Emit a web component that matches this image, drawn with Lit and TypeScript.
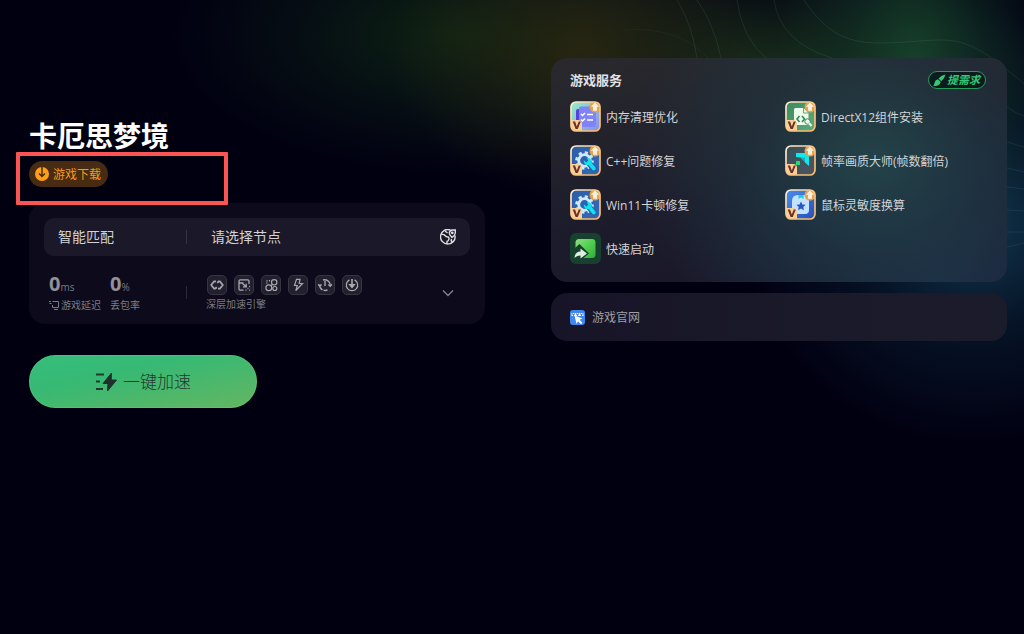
import { LitElement, html, css, svg } from "lit";
import { customElement } from "lit/decorators.js";

/* Shared frame of the member tools: gold rim, arrow badge and V corner. */
const memberIcon = (id: string, from: string, to: string, art: unknown) => html`
  <svg class="tile" viewBox="0 0 31 31" aria-hidden="true">
    <defs>
      <linearGradient id="bg-${id}" x1="0" y1="0" x2="1" y2="1">
        <stop offset="0" stop-color=${from} /><stop offset="1" stop-color=${to} />
      </linearGradient>
      <linearGradient id="rim-${id}" x1="0" y1="0" x2="1" y2="1">
        <stop offset="0" stop-color="#fff1d6" /><stop offset=".5" stop-color="#f9c683" /><stop offset="1" stop-color="#f9b968" />
      </linearGradient>
      <clipPath id="clip-${id}"><rect x="1" y="1" width="29" height="29" rx="5" /></clipPath>
    </defs>
    <rect x="1" y="1" width="29" height="29" rx="5" fill="url(#bg-${id})" />
    ${art}
    <g clip-path="url(#clip-${id})">
      <circle cx="25" cy="6" r="5.500" fill="#e5a348" />
      <path d="M25 1.500l4.200 4.200h-2.200v4h-4V5.700h-2.200z" fill="#f6efe0" />
      <path d="M0 19h8q4 0 4 4v8H0z" fill="#fbcf9a" />
    </g>
    <path d="M2.700 20.500h2.400l1.700 5 1.900-5h2.100l-3 7.500H5.600z" fill="#6b3326" />
    <rect x="1" y="1" width="29" height="29" rx="5" fill="none" stroke="url(#rim-${id})" stroke-width="1.700" />
  </svg>`;

const gearArt = svg`
  <g fill="none" stroke="#cfeaff">
    <circle cx="14.500" cy="15.500" r="7.800" stroke-width="3" stroke-dasharray="3.100 3.026" />
    <circle cx="14.500" cy="15.500" r="5.800" stroke-width="2.800" />
  </g>
  <path d="M17 16l2 2 5.500 6.500" stroke="#2f62ad" stroke-width="6" fill="none" stroke-linecap="round" />
  <path d="M17 13a4 4 0 0 1 4.700 5l3.700 4.400q1 1.600-.5 2.600t-2.700-.6l-3.600-4.400a4 4 0 0 1-4.800-4.800l2.500 2.300 1.900-1.700z" fill="#10e2ee" />`;

const listArt = svg`
  <rect x="6" y="8" width="14" height="16" rx="2" fill="#5540e0" />
  <rect x="9" y="5.500" width="17" height="20.500" rx="2" fill="#7f83f7" />
  <g stroke="#fff" stroke-width="1.500" fill="none">
    <path d="M11 13l1.500 1.500L15 12M17 13.500h6M11 18.500l1.500 1.500L15 17.500M17 19h6" />
  </g>`;

const codeArt = svg`
  <path d="M10.500 7h8l5 5v12h-13q-1.500 0-1.500-1.500v-14Q9 7 10.500 7z" fill="#edfbe9" />
  <path d="M18.500 7v5h5" fill="none" stroke="#5fa97c" />
  <g fill="none" stroke="#35835c" stroke-width="1.600">
    <path d="M14.500 15l-2.500 3 2.500 3M17 15l2.500 3-2.500 3" />
  </g>
  <circle cx="22.500" cy="20.500" r="2.700" fill="#edfbe9" stroke="#35835c" />
  <path d="M24 22l2.500 3" stroke="#edfbe9" stroke-width="2" />`;

const frameArt = svg`
  <path d="M11 8h13v13l-4-3.500V15h-2l-2.500-2.500L11 12z" fill="#12e9ea" />
  <path d="M15.500 12.500L20 17.500V12.500z" fill="#0cb4c8" />
  <path d="M11 16h4v4h-4z" fill="#19e070" />`;

const starArt = svg`
  <path d="M7 12q0-6 6-6h11v15q0 4-4 4H11q-4 0-4-4z" fill="#c4e2ff" />
  <path d="M13.500 6h5v4L16 8.500 13.500 10z" fill="#16cfe4" />
  <path d="M16 12.500l1.400 2.900 3.200.4-2.300 2.200.6 3.200-2.900-1.600-2.900 1.600.6-3.200-2.300-2.200 3.200-.4z" fill="#2857c0" />`;

const launchIcon = html`
  <svg class="tile" viewBox="0 0 31 31" aria-hidden="true">
    <defs>
      <linearGradient id="launch" x1="0" y1="0" x2="1" y2="1">
        <stop offset="0" stop-color="#8fdc88" /><stop offset=".5" stop-color="#52cf50" /><stop offset="1" stop-color="#31ad3b" />
      </linearGradient>
    </defs>
    <rect width="31" height="31" rx="6" fill="#17402f" />
    <rect x="5.500" y="6" width="20" height="19" rx="3.500" fill="url(#launch)" />
    <path d="M5 15l4.500-4L19 20.500l-6 5H5z" fill="#17402f" />
    <path d="M4.500 25q.5-6.500 6-6.500v-3l6.500 5-6.500 5v-3q-3.500-.3-6 2.500z" fill="#dcefe0" />
  </svg>`;

const services = [
  { name: "内存清理优化", icon: memberIcon("list", "#8ff0c4", "#8a8cf0", listArt) },
  { name: "DirectX12组件安装", icon: memberIcon("code", "#3c8a62", "#5fa97c", codeArt) },
  { name: "C++问题修复", icon: memberIcon("gear", "#2d5ea8", "#3468b6", gearArt) },
  { name: "帧率画质大师(帧数翻倍)", icon: memberIcon("frame", "#36505a", "#4a5560", frameArt) },
  { name: "Win11卡顿修复", icon: memberIcon("gear2", "#2d5ea8", "#3468b6", gearArt) },
  { name: "鼠标灵敏度换算", icon: memberIcon("star", "#4b8cf0", "#2450b8", starArt) },
  { name: "快速启动", icon: launchIcon },
];

const engines = [
  svg`<path d="M9 6.300H7.200L4.200 10l3 3.700h.8l1.800-1.500M11 13.700h1.800l3-3.700-3-3.700H12l-1.800 1.500" stroke-width="1.800" stroke-linejoin="round" />`,
  svg`<path d="M15 9V6q0-1.200-1.200-1.200H6.200Q5 4.800 5 6v8q0 1.200 1.200 1.200H9.500M5 8h4.500M8.500 8.500l3.500 3M12.200 8.800v3H9M13.500 13.500h.9M15.200 11.500h.9M11.500 15.200h.9M15.200 15.200h.9" stroke-width="1.300" />`,
  svg`<circle cx="7.800" cy="12.800" r="2.900" /><circle cx="13.200" cy="7.300" r="2.700" /><circle cx="13.800" cy="13.500" r="2" /><path d="M5 8h1.500M5.500 5.500l1 .8M8.500 5v1.500M10 10.800l1.300-1.500" />`,
  svg`<path d="M12 4.300H8.500L6.500 10.500h2.800L7.800 15.700l6.700-7.200h-3.300z" />`,
  svg`<path d="M7.500 14.900a5.500 5.500 0 0 1-2.700-5.400M8 5a5.500 5.500 0 0 1 7.200 4.500M12.500 14.900a5.500 5.500 0 0 1-4 .3M3.200 9.200l1.600 2 1.800-1.600M16.800 9.200l-1.600 2-1.800-1.600M10 6v5" stroke-width="1.400" />`,
  svg`<path d="M7.500 4.900a5.700 5.700 0 1 0 5 0" /><path d="M10 4v6.500" stroke-width="1.600" /><path d="M7.500 9.500h5L10 12.500z" fill="currentColor" />`,
];

@customElement("app-root")
export class AppRoot extends LitElement {
  static styles = css`
    :host {
      display: block;
      font-family: "Open Sans", "Noto Sans CJK SC", sans-serif;
      color: #d3d4d8;
    }
    * { box-sizing: border-box; }
    h1, h2, p, ul, dl, dd, dt { margin: 0; padding: 0; }
    button, a { font: inherit; color: inherit; text-decoration: none; cursor: pointer; }
    button { border: 0; background: none; padding: 0; }

    .page {
      position: relative;
      isolation: isolate;
      overflow: hidden;
      min-height: 100vh;
      display: grid;
      grid-template-columns: 1fr 1fr;
      align-items: start;
      gap: 66px;
      padding: 58px 17px 58px 29px;
      background:
        radial-gradient(ellipse 190px 150px at calc(100% - 444px) 50px, rgba(48, 42, 16, 0.75), rgba(42, 40, 18, 0.4) 50%, transparent),
        radial-gradient(ellipse 290px 140px at calc(100% - 564px) 35px, rgba(14, 36, 18, 0.95), rgba(10, 28, 22, 0.5) 55%, transparent),
        radial-gradient(ellipse 140px 220px at calc(100% - 109px) 60px, rgba(25, 74, 46, 0.8), rgba(20, 58, 42, 0.45) 50%, transparent),
        radial-gradient(ellipse 280px 120px at calc(100% - 254px) 75px, rgba(28, 54, 28, 0.9), rgba(22, 40, 26, 0.5) 55%, transparent),
        radial-gradient(ellipse 230px 220px at calc(100% - 50px) 225px, rgba(20, 60, 84, 0.9), rgba(12, 40, 62, 0.45) 50%, transparent),
        #010011;
    }
    .contours {
      position: absolute;
      top: 0;
      right: 0;
      z-index: -1;
      width: 400px;
      height: 300px;
      fill: none;
      stroke: rgba(150, 190, 190, 0.11);
    }

    .game { padding-top: 58px; }
    h1 { font-size: 28px; line-height: 40px; font-weight: 700; color: #fff; }
    .download-row { position: relative; display: flex; margin-top: 5px; }
    .download {
      display: flex;
      align-items: center;
      gap: 4px;
      height: 26px;
      padding: 0 7px 0 6px;
      border-radius: 13px;
      background: #472b12;
      color: #f79a17;
      font-size: 12px;
      line-height: 18px;
    }
    .download svg { width: 14px; height: 14px; }
    .download span, .tools span, .site span { padding-top: 2px; }
    .marker {
      position: absolute;
      top: -9px;
      left: -13px;
      width: 212px;
      height: 53px;
      border: 4px solid #fb5454;
      border-radius: 1px;
      pointer-events: none;
    }

    .panel { border-radius: 16px; }
    .accel {
      margin-top: 16px;
      padding: 15px 15px 12px;
      background: #0c0a1b;
    }
    .picker {
      display: grid;
      grid-template-columns: 142px 1fr;
      align-items: center;
      height: 38px;
      border-radius: 10px;
      background: #1b1929;
      font-size: 14px;
      line-height: 20px;
      color: #d2d2d6;
    }
    .picker button { display: flex; align-items: center; justify-content: space-between; height: 14px; padding: 0 14px; text-align: left; }
    .picker button + button { padding-left: 24px; border-left: 1px solid #343242; }
    .picker svg { width: 16px; height: 16px; }

    .status {
      display: grid;
      grid-template-columns: 142px 1fr auto;
      align-items: center;
      margin-top: 17px;
      color: #7b7a83;
      font-size: 10px;
      line-height: 14px;
    }
    .figures { display: flex; gap: 9px; padding-left: 5px; }
    .figures div { display: flex; flex-direction: column-reverse; }
    .figures dt { display: flex; align-items: center; gap: 2px; }
    .figures dt svg { width: 10px; height: 10px; }
    .figures dd { line-height: 22px; }
    .figures b { font-size: 20px; font-weight: 700; color: #929197; }
    .engine { display: flex; align-items: center; gap: 19px; }
    .engine::before { content: ""; width: 1px; height: 13px; background: #2c2a38; }
    .chips { display: flex; gap: 7px; height: 22px; padding-left: 1px; list-style: none; }
    .chips svg {
      display: block;
      width: 20px;
      height: 20px;
      border: 1px solid #373542;
      border-radius: 5px;
      background: #22202e;
      color: #a9a8af;
      fill: none;
      stroke: currentColor;
      stroke-width: 1.200;
    }
    .more { display: grid; place-items: center; width: 14px; height: 14px; margin-right: 15px; }
    .more svg { width: 12px; height: 8px; }

    .boost {
      display: flex;
      align-items: center;
      justify-content: center;
      gap: 6px;
      width: 50%;
      height: 53px;
      margin-top: 31px;
      border-radius: 27px;
      background: linear-gradient(168deg, #37bd7d 0%, #36b974 35%, #64b661 100%);
      box-shadow: inset 0 0 0 1px rgba(110, 214, 140, 0.3);
      color: #24382f;
      font-size: 17px;
      font-weight: 300;
      line-height: 24px;
    }
    .boost svg { width: 22px; height: 20px; }

    .aside { display: grid; gap: 11px; }
    .services {
      padding: 13px 19px 18px;
      background:
        radial-gradient(ellipse 240px 200px at 70% 45%, rgba(36, 72, 76, 0.85), rgba(32, 62, 72, 0.45) 50%, transparent),
        radial-gradient(ellipse 260px 200px at 85% 100%, rgba(32, 58, 86, 0.6), transparent),
        linear-gradient(170deg, #29292d, #1c1b2b 60%, #181628);
    }
    .services header { display: flex; align-items: center; justify-content: space-between; padding-right: 2px; }
    h2 { font-size: 13px; line-height: 18px; font-weight: 700; color: #e2e2e5; }
    .request {
      display: flex;
      align-items: center;
      gap: 1px;
      height: 18px;
      padding: 0 5px 0 4px;
      border: 1px solid #249a5c;
      border-radius: 9px;
      background: #0c1c1d;
      color: #35c878;
      font-size: 11px;
      font-style: italic;
      font-weight: 700;
      line-height: 16px;
    }
    .request svg { width: 13px; height: 13px; }
    .tools {
      display: grid;
      grid-template-columns: 1fr 1fr;
      gap: 13px 12px;
      margin-top: 12px;
      list-style: none;
      font-size: 12px;
      line-height: 18px;
    }
    .tools button { display: flex; align-items: center; gap: 5px; white-space: nowrap; }
    .tile { display: block; width: 31px; height: 31px; }
    .site {
      display: flex;
      align-items: center;
      gap: 7px;
      height: 48px;
      padding: 0 19px;
      background: linear-gradient(90deg, #161426, #1b1a2a 60%, #1a1b2b);
      color: #a09fa6;
      font-size: 12px;
      line-height: 18px;
    }
    .site svg { width: 15px; height: 15px; }
  `;

  render() {
    return html`
      <div class="page">
        <svg class="contours" viewBox="0 0 400 300" aria-hidden="true">
          <path d="M180 0C200 30 220 43 255 43S315 37 335 42S375 62 400 84" />
          <path d="M150 0Q156 42 208 58M113 0Q118 38 142 58M73 0Q90 24 97 58M53 0Q68 24 73 58" />
          <path d="M0 30Q55 26 84 58" stroke-opacity=".5" />
          <path d="M383 107q8 6 17 9M383 142l17 5M383 168l17 4M383 187l17 2M383 210l17 1M383 232h17M383 247l17-4" />
        </svg>

        <main class="game">
          <h1>卡厄思梦境</h1>
          <div class="download-row">
            <button class="download">
              <svg viewBox="0 0 14 14" aria-hidden="true">
                <circle cx="7" cy="7" r="7" fill="#ff9f18" />
                <path d="M7 0v9M4 6.500l3 3 3-3" fill="none" stroke="#472b12" stroke-width="1.500" />
              </svg>
              <span>游戏下载</span>
            </button>
            <div class="marker"></div>
          </div>

          <section class="panel accel">
            <div class="picker">
              <button>智能匹配</button>
              <button>
                请选择节点
                <svg viewBox="0 0 16 16" fill="none" stroke="#dedee2" stroke-width="1.400" aria-hidden="true">
                  <path d="M10.500 1A7.300 7.300 0 1 0 15 6.500" />
                  <path d="M12 8.500Q9.300 6 9.300 4T12 1h3.300v3Q15 6.500 12 8.500z" />
                  <circle cx="12.300" cy="3.800" r=".7" />
                  <path d="M1.500 5.500q2.500-.5 3.500 1t3 1.500q1.500.5.800 2.500T7 12.500L7 15M5 2l2.500 2M12.500 13q-2-1-1-3" />
                </svg>
              </button>
            </div>
            <div class="status">
              <dl class="figures">
                <div>
                  <dt>
                    <svg viewBox="0 0 10 10" fill="none" stroke="currentColor" aria-hidden="true">
                      <path d="M3.500 1.500h6v6h-6V5M0 1.500h2M.5 3.500h2M5 9.500h4" />
                    </svg>
                    游戏延迟
                  </dt>
                  <dd><b>0</b>ms</dd>
                </div>
                <div><dt>丢包率</dt><dd><b>0</b>%</dd></div>
              </dl>
              <div class="engine">
                <div>
                  <ul class="chips">
                    ${engines.map((e) => html`<li><svg viewBox="1 1 18 18" aria-hidden="true">${e}</svg></li>`)}
                  </ul>
                  <p>深层加速引擎</p>
                </div>
              </div>
              <button class="more" aria-label="展开">
                <svg viewBox="0 0 12 8" fill="none" stroke="#85848c" stroke-width="1.300" aria-hidden="true"><path d="M1 1.500l5 5 5-5" /></svg>
              </button>
            </div>
          </section>

          <button class="boost">
            <svg viewBox="0 0 22 20" aria-hidden="true">
              <path d="M1 2.500h8M1 9.500h4M1 17h7" stroke="#24382f" stroke-width="1.800" />
              <path d="M16.500 1L8 11.500h5L12.500 19 21.500 8h-5.300z" fill="#20302c" stroke="#20302c" stroke-linejoin="round" />
            </svg>
            一键加速
          </button>
        </main>

        <aside class="aside">
          <section class="panel services">
            <header>
              <h2>游戏服务</h2>
              <button class="request">
                <svg viewBox="0 0 13 13" aria-hidden="true">
                  <path d="M12.500 0.500Q8.500 1 5.500 4.500l2.700 2.700q3.500-2.700 4.300-6.700z" fill="#35c878" />
                  <path d="M5 5.300q-2.800.3-3.300 3Q1.500 10.500.3 11.800q5.700 1.200 7.400-3.800z" fill="#35c878" />
                </svg>
                提需求
              </button>
            </header>
            <ul class="tools">
              ${services.map((s) => html`<li><button>${s.icon}<span>${s.name}</span></button></li>`)}
            </ul>
          </section>
          <a class="panel site" href="#">
            <svg viewBox="0 0 15 15" aria-hidden="true">
              <rect width="15" height="15" rx="3" fill="#3f86ee" />
              <path d="M1.500 3h12v3h-12z" fill="#f2f6ff" />
              <path d="M2.500 3.500l1 2 1-2M6.500 3.500l1 2 1-2M10.500 3.500l1 2 1-2" fill="none" stroke="#23458c" stroke-width=".9" />
              <path d="M4.500 5.500l8 3-3 1.300 3 3-1.500 1.500-3-3L6.500 14z" fill="#fff" />
            </svg>
            <span>游戏官网</span>
          </a>
        </aside>
      </div>
    `;
  }
}
